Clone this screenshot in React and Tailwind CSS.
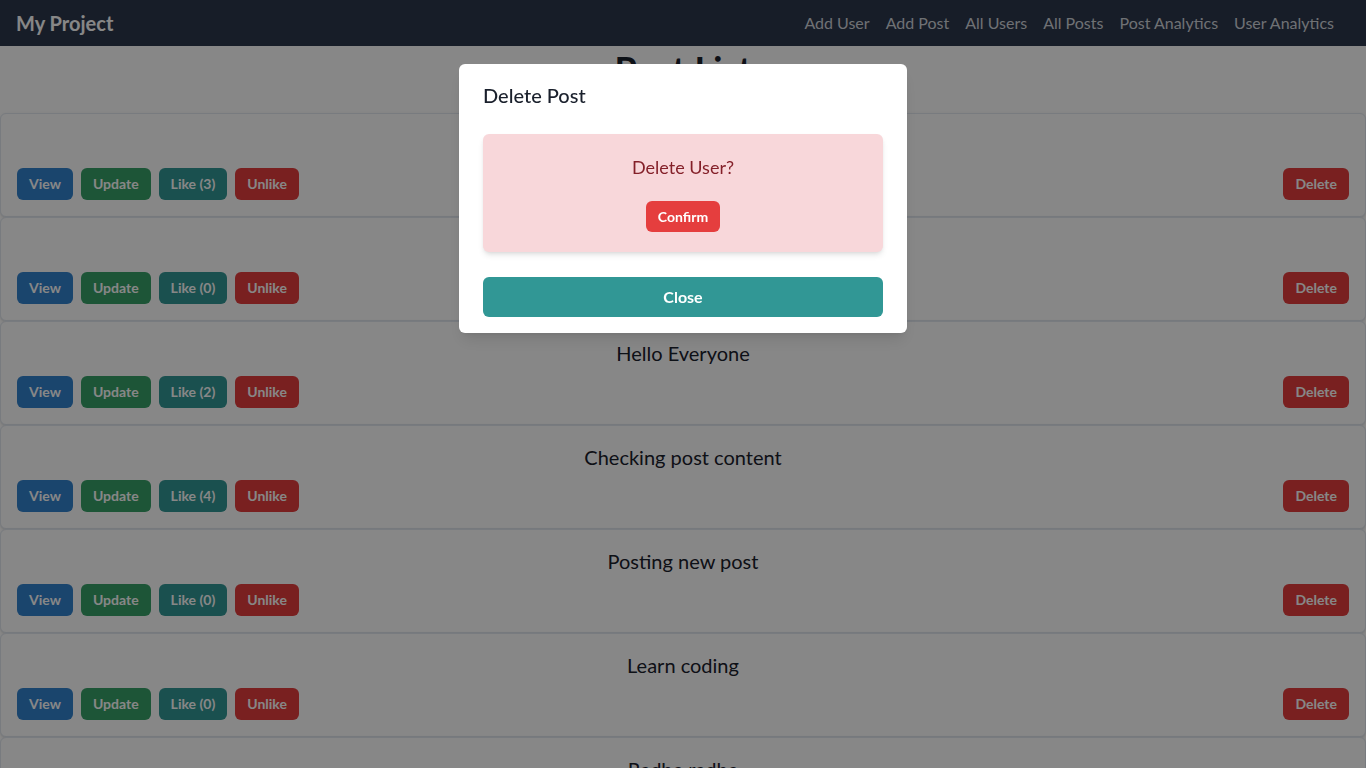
import React from "react";

const posts = [
  { id: 1, title: "My first post", likes: 3 },
  { id: 2, title: "Good morning", likes: 0 },
  { id: 3, title: "Hello Everyone", likes: 2 },
  { id: 4, title: "Checking post content", likes: 4 },
  { id: 5, title: "Posting new post", likes: 0 },
  { id: 6, title: "Learn coding", likes: 0 },
  { id: 7, title: "Radhe radhe", likes: 1 },
];

const links = ["Add User", "Add Post", "All Users", "All Posts", "Post Analytics", "User Analytics"];

const PostCard = ({ post }) => (
  <div className="border border-[#e2e8f0] rounded-md shadow-sm px-4 pt-[17px] pb-4 bg-white">
    <p className="text-center text-xl leading-7 text-[#1a202c] h-7">{post.title}</p>
    <div className="flex items-center mt-[9px]">
      <button className="bg-[#3182ce] text-white font-bold text-sm h-8 px-3 rounded-md mr-2">View</button>
      <button className="bg-[#38a169] text-white font-bold text-sm h-8 px-3 rounded-md mr-2">Update</button>
      <button className="bg-[#319795] text-white font-bold text-sm h-8 px-3 rounded-md mr-2">
        Like ({post.likes})
      </button>
      <button className="bg-[#e53e3e] text-white font-bold text-sm h-8 px-3 rounded-md">Unlike</button>
      <button className="bg-[#e53e3e] text-white font-bold text-sm h-8 px-3 rounded-md ml-auto">Delete</button>
    </div>
  </div>
);

export default function App() {
  return (
    <div className="h-screen overflow-hidden bg-white font-['Lato',sans-serif] relative">
      <nav className="h-[46px] bg-[#2d384d] flex items-center px-4">
        <h1 className="text-xl font-bold text-white">My Project</h1>
        <div className="flex ml-auto">
          {links.map((l) => (
            <a key={l} className="text-base text-gray-300 mr-4">
              {l}
            </a>
          ))}
        </div>
      </nav>
      <h1 className="text-4xl font-bold text-center text-[#1a202c] leading-10 mt-[3px] mb-[24px]">Post List</h1>
      <div className="flex flex-col">
        {posts.map((p) => (
          <PostCard key={p.id} post={p} />
        ))}
      </div>

      {/* modal */}
      <div className="fixed inset-0 bg-black/[0.47]"></div>
      <div className="fixed inset-0 flex justify-center items-start pt-16">
        <div className="bg-white rounded-md w-[448px] px-6 pt-[17px] pb-4 shadow-lg">
          <h2 className="text-xl leading-7 font-medium text-[#1a202c]">Delete Post</h2>
          <div className="mt-[25px] bg-[#f8d7da] rounded-md shadow-md py-5 flex flex-col items-center">
            <p className="text-lg leading-[26px] text-[#842029]">Delete User?</p>
            <button className="mt-[21px] h-[31px] px-3 bg-[#e53e3e] text-white text-sm font-bold rounded-md">
              Confirm
            </button>
          </div>
          <button className="mt-[25px] w-full h-10 bg-[#319795] text-white font-bold rounded-md">Close</button>
        </div>
      </div>
    </div>
  );
}
